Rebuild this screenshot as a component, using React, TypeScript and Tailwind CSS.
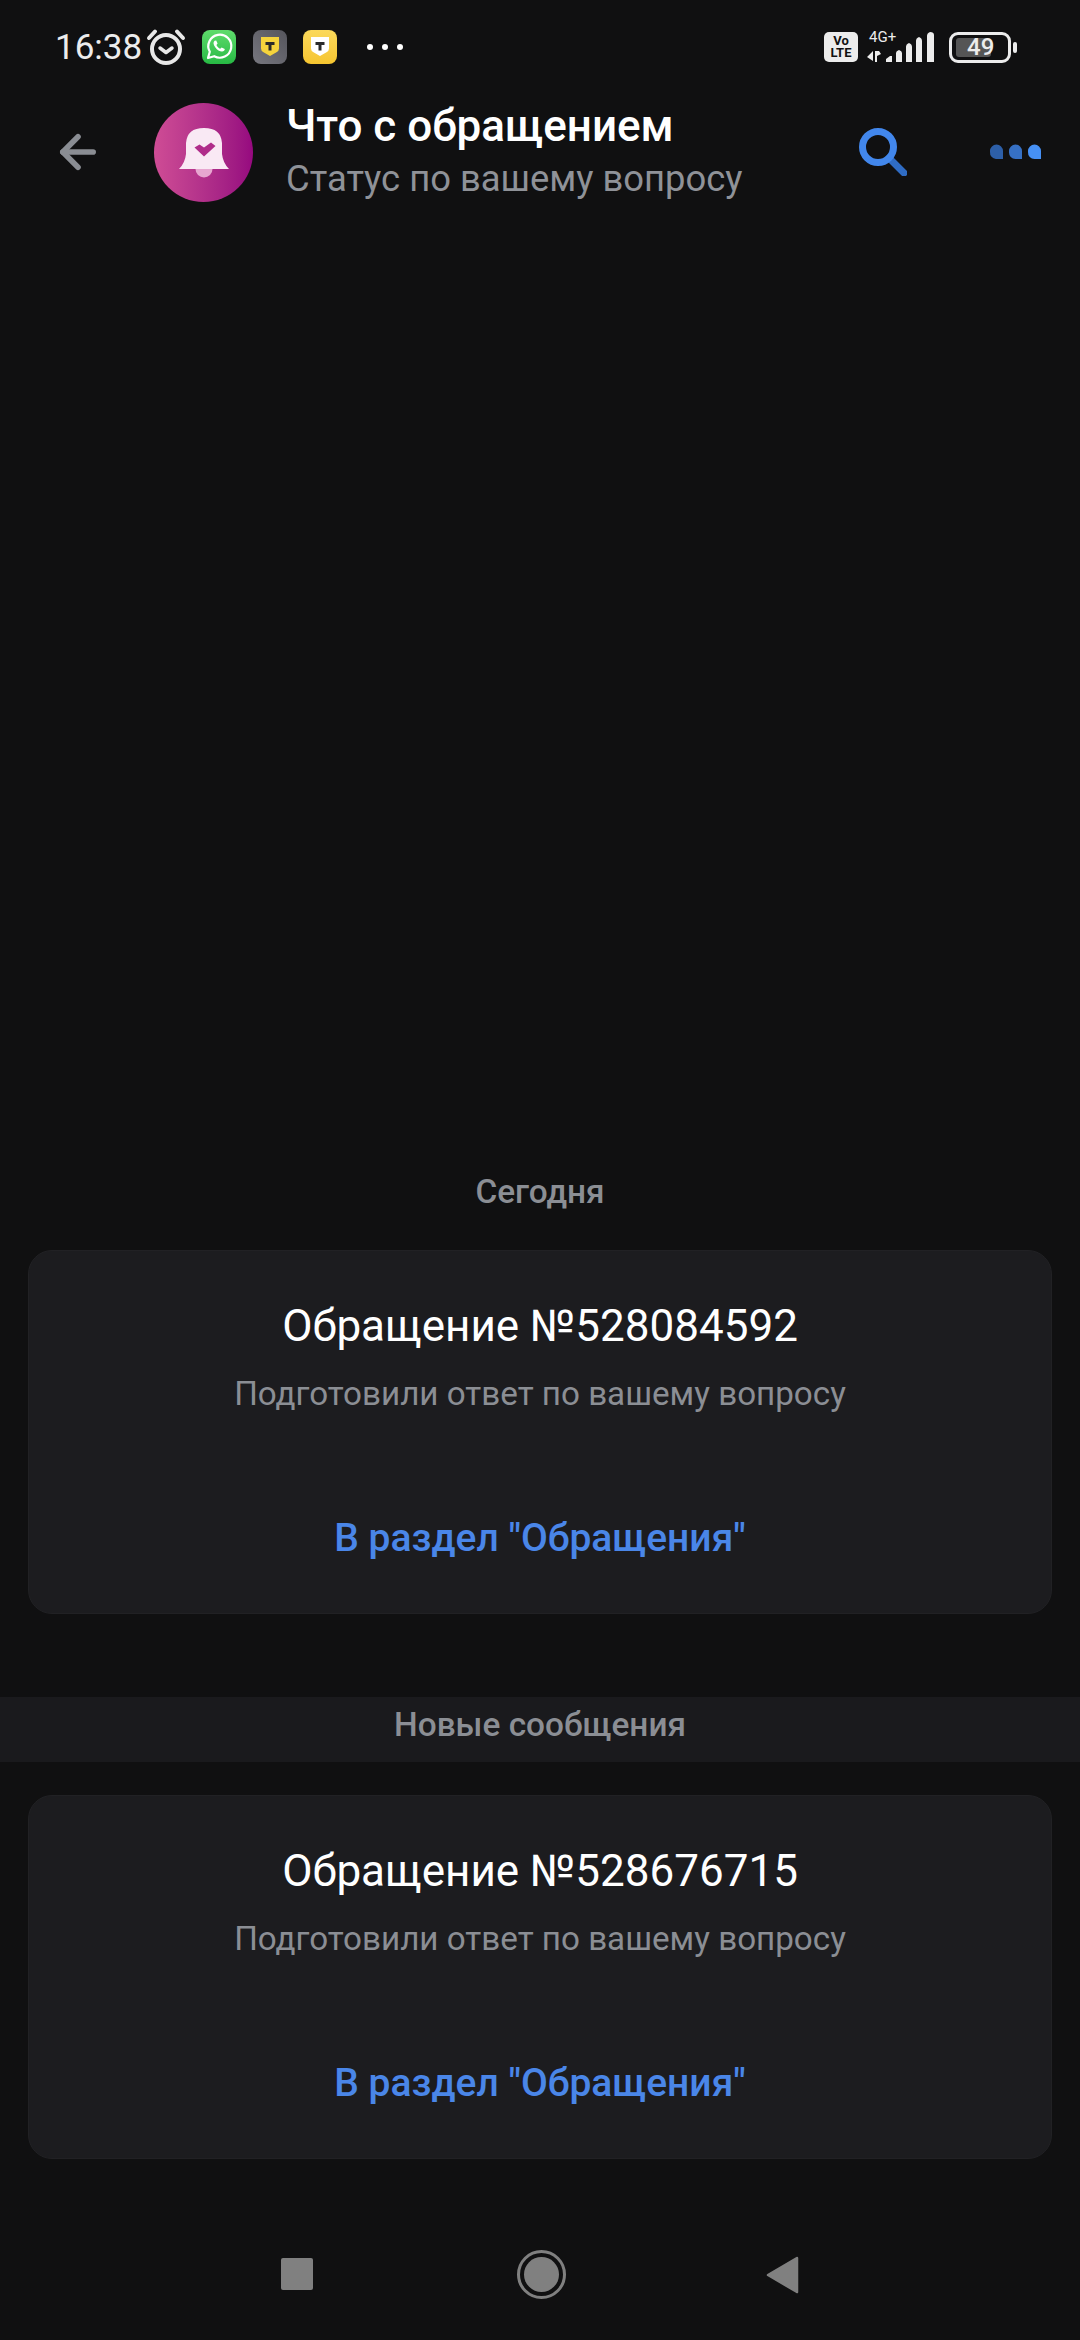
import {ArrowLeft} from "lucide-react";

function AlarmIcon() {
  return (
    <svg width="40" height="38" viewBox="0 0 40 38" fill="none" stroke="#e8e8e8" strokeLinecap="round">
      <circle cx="20" cy="21" r="14" strokeWidth="4" />
      <path d="M14 20l6 4.5 6-4.5" strokeWidth="3.5" strokeLinejoin="round" />
      <path d="M3 10 9 3.5M37 10 31 3.5" strokeWidth="4" />
    </svg>
  );
}

function WhatsappIcon() {
  return (
    <svg width="34" height="34" viewBox="0 0 34 34" className="rounded-[8px]">
      <defs>
        <linearGradient id="wa" x1="0" y1="0" x2="0" y2="1">
          <stop offset="0" stopColor="#5fdc6c" />
          <stop offset="1" stopColor="#27b944" />
        </linearGradient>
      </defs>
      <rect width="34" height="34" fill="url(#wa)" />
      <path d="M6 28l1.8-6.2a11.5 11.5 0 1 1 4.4 4.4z" fill="none" stroke="#fff" strokeWidth="2.2" strokeLinejoin="round" />
      <path d="M12.6 10.8c-1.6 1.4-1.4 3.6.6 6.4 2.2 3 4.8 4.6 7 4.4 1.4-.2 2.6-1.2 2.6-2.6l-3.2-1.6-1.4 1.4c-1.6-.6-3-2-3.8-3.8l1.2-1.4-1.4-3.2z" fill="#fff" />
    </svg>
  );
}

function ShieldApp({dark}: {dark: boolean}) {
  return (
    <div
      className={
        dark
          ? "w-[34px] h-[34px] rounded-[8px] flex items-center justify-center bg-gradient-to-tr from-[#77777f] to-[#55555c]"
          : "w-[34px] h-[34px] rounded-[8px] flex items-center justify-center bg-gradient-to-b from-[#fbd95a] to-[#f6c52f]"
      }
    >
      <svg width="20" height="22" viewBox="0 0 20 22">
        <path d="M1 1h18v11.5q0 2.5-2.5 3.8L10 20l-6.5-3.7Q1 15 1 12.500z" fill={dark ? "#f5d33c" : "#ffffff"} />
        <path d="M5.500 6h9v3h-3v5.500h-3V9h-3z" fill="#2a2a2a" />
      </svg>
    </div>
  );
}

function SignalIcon() {
  return (
    <svg width="68" height="31" viewBox="0 0 68 31" fill="#ededed">
      <path d="M6 19v10L0 25zM8 19v11h2v-6l4-2-2-3z" />
      <path d="M19 30v-3l4-3h2v6zM29 30v-9q0-2 3-3 3 1 3 3v9zM39 30V15q0-3 3-4 3 1 3 4v15zM49 30V9q0-3 3-4 3 1 3 4v21zM60 30V4q0-3 3-4 4 0 4 3v27z" />
    </svg>
  );
}

function StatusBar() {
  return (
    <div className="h-[94px] flex items-center pl-[55px] pr-[63px] text-[#ececec] font-['Roboto',sans-serif]">
      <span className="text-[35px] leading-none w-[91px]">16:38</span>
      <AlarmIcon />
      <div className="ml-[16px]">
        <WhatsappIcon />
      </div>
      <div className="ml-[17px]">
        <ShieldApp dark />
      </div>
      <div className="ml-[16px]">
        <ShieldApp dark={false} />
      </div>
      <div className="ml-[30px] flex gap-[9px]">
        <div className="w-[6px] h-[6px] rounded-full bg-white" />
        <div className="w-[6px] h-[6px] rounded-full bg-white" />
        <div className="w-[6px] h-[6px] rounded-full bg-white" />
      </div>
      <div className="flex-1" />
      <div className="w-[34px] h-[30px] rounded-[5px] bg-[#ececec] flex flex-col items-center justify-center text-[#111] text-[13px] leading-[12px] font-bold">
        <span>Vo</span>
        <span>LTE</span>
      </div>
      <div className="relative ml-[9px] w-[68px] h-[31px]">
        <span className="absolute left-[2px] -top-[3px] text-[15px] leading-[16px] text-[#ececec]">4G+</span>
        <SignalIcon />
      </div>
      <div className="ml-[14px] w-[62px] h-[31px] rounded-[9px] border-[3px] border-[#ececec] flex items-center pl-[4px]">
        <div className="relative w-[35px] h-[19px] rounded-[3px] bg-[#555555]">
          <span className="absolute left-[11px] top-[-3px] text-[24px] leading-[25px] font-medium text-[#ececec]">49</span>
        </div>
      </div>
      <div className="ml-[2px] w-[4px] h-[11px] rounded-full bg-[#ececec]" />
    </div>
  );
}

function Avatar() {
  return (
    <div className="w-[99px] h-[99px] rounded-full flex items-center justify-center bg-gradient-to-r from-[#cf4c95] to-[#96087f]">
      <svg width="52" height="52" viewBox="0 0 52 52">
        <circle cx="26" cy="43" r="8.500" fill="#e7a6d0" />
        <path d="M1 43 Q7 37 8 28 V17 Q9 2 26 2 Q43 2 44 17 V28 Q45 37 51 43 Z" fill="#f9e9f4" />
        <path d="M16.500 21.500l5-3 4.500 3 7-5 4.500 3.500-11.500 10.500z" fill="#b02c8a" />
      </svg>
    </div>
  );
}

function Header() {
  return (
    <div className="h-[116px] flex items-center pl-[52px] pr-[39px] font-['Roboto',sans-serif]">
      <ArrowLeft size={52} strokeWidth={2.6} color="#8a8d93" />
      <div className="ml-[50px]">
        <Avatar />
      </div>
      <div className="ml-[33px] flex-1 flex flex-col -mt-[4px]">
        <span className="text-[44px] leading-[52px] font-medium text-white">Что с обращением</span>
        <span className="text-[36.4px] leading-[44px] mt-[5px] text-[#8f9298]">Статус по вашему вопросу</span>
      </div>
      <svg width="48" height="48" viewBox="0 0 48 48" fill="none" strokeLinecap="round">
        <path d="M30 30 45 45" stroke="#2f6cc4" strokeWidth="7" />
        <circle cx="19" cy="19" r="15.500" stroke="#4287ec" strokeWidth="7" />
      </svg>
      <svg width="52" height="16" viewBox="0 0 52 16" className="ml-[82px]">
        <path d="M1 7a6.500 6.500 0 0 1 13 0v8H7A6.500 6.500 0 0 1 1 8z" fill="#2d5fa8" />
        <path d="M20 7a6.500 6.500 0 0 1 13 0v8h-6.500A6.500 6.500 0 0 1 20 8z" fill="#3670c4" />
        <path d="M39 7a6.500 6.500 0 0 1 13 0v8h-6.500A6.500 6.500 0 0 1 39 8z" fill="#4690f5" />
      </svg>
    </div>
  );
}

function AppealCard({number}: {number: string}) {
  return (
    <div className="mx-[28px] h-[364px] rounded-[24px] bg-[#1c1c1f] border border-[#212124] flex flex-col items-center pt-[52px] font-['Roboto',sans-serif]">
      <span className="text-[44px] leading-[46px] text-white">Обращение №{number}</span>
      <span className="text-[33.2px] leading-[40px] mt-[25px] text-[#8b8e94]">Подготовили ответ по вашему вопросу</span>
      <span className="text-[39px] leading-[48px] mt-[100px] font-medium text-[#4a86e8]">В раздел "Обращения"</span>
    </div>
  );
}

function NavBar() {
  return (
    <div className="flex-1 flex items-start justify-center pt-[99px]">
      <div className="w-[32px] h-[32px] rounded-[2px] bg-[#808080]" />
      <div className="ml-[204px] -mt-[8px] w-[49px] h-[49px] rounded-full border-[3px] border-[#808080] flex items-center justify-center">
        <div className="w-[35px] h-[35px] rounded-full bg-[#808080]" />
      </div>
      <svg width="33" height="38" viewBox="0 0 33 38" className="ml-[200px] -mt-[2px]">
        <path d="M31 2 2 19l29 17z" fill="#808080" stroke="#808080" strokeWidth="2.500" strokeLinejoin="round" />
      </svg>
    </div>
  );
}

export default function App() {
  return (
    <div className="w-[1080px] h-[2340px] flex flex-col bg-[#101011] overflow-hidden">
      <StatusBar />
      <Header />
      <div className="h-[954px]" />
      <div className="h-[56px] flex items-center justify-center text-[33.4px] font-medium text-[#8b8e94] font-['Roboto',sans-serif]">
        Сегодня
      </div>
      <div className="mt-[30px]">
        <AppealCard number="528084592" />
      </div>
      <div className="mt-[83px] h-[65px] pb-[8px] bg-[#1a1a1d] flex items-center justify-center text-[33.4px] font-medium text-[#8b8e94] font-['Roboto',sans-serif]">
        Новые сообщения
      </div>
      <div className="mt-[33px]">
        <AppealCard number="528676715" />
      </div>
      <NavBar />
    </div>
  );
}
